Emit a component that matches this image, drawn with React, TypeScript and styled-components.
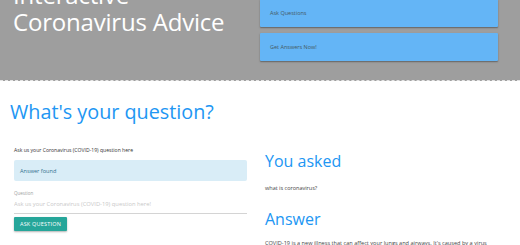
import React from "react";
import styled, { createGlobalStyle } from "styled-components";

const GlobalStyle = createGlobalStyle`
  *, *::before, *::after {
    box-sizing: border-box;
  }
  html, body {
    margin: 0;
    padding: 0;
    background: #ffffff;
    font-family: "Open Sans", "Noto Sans", sans-serif;
    overflow: hidden;
  }
`;

const Header = styled.header`
  display: flex;
  height: 81px;
  background: #9e9e9e;
  border-bottom: 1px dashed #e4e4e4;
  overflow: hidden;
`;

const Title = styled.h1`
  flex: 0 0 260px;
  margin: -19px 0 0 0;
  padding-left: 13px;
  color: #ffffff;
  font-weight: 400;
  font-size: 24px;
  line-height: 27px;
  letter-spacing: -0.2px;
`;

const Nav = styled.nav`
  display: flex;
  flex-direction: column;
  gap: 6px;
  width: 238px;
  margin-top: -1px;
`;

const NavCard = styled.div`
  height: 28px;
  display: flex;
  align-items: center;
  padding-left: 10px;
  background: #64b5f6;
  color: #455a64;
  font-size: 5.5px;
  border-radius: 1px;
  box-shadow: 0 1px 2px rgba(0, 0, 0, 0.25), 0 1px 1px rgba(0, 0, 0, 0.15);
`;

const Main = styled.main`
  padding: 0 10px;
`;

const PageHeading = styled.h2`
  margin: 18px 0 0;
  color: #2196f3;
  font-weight: 400;
  font-size: 19.8px;
  line-height: 26px;
`;

const Columns = styled.div`
  display: grid;
  grid-template-columns: 233px 233px;
  column-gap: 18px;
  padding-left: 4px;
  margin-top: 20px;
`;

const Column = styled.section`
  display: flex;
  flex-direction: column;
`;

const Hint = styled.p`
  margin: 0;
  color: #333333;
  font-size: 5.1px;
  line-height: 10px;
`;

const Alert = styled.div`
  margin-top: 5px;
  height: 21px;
  display: flex;
  align-items: center;
  padding-left: 6px;
  background: #d9edf7;
  color: #31708f;
  font-size: 5.6px;
  border-radius: 2px;
`;

const FieldLabel = styled.label`
  margin-top: 9px;
  color: #9e9e9e;
  font-size: 4.5px;
  line-height: 6px;
`;

const Input = styled.input`
  height: 18px;
  padding: 0 0 1px;
  margin: 0;
  border: none;
  border-bottom: 1px solid #d4d4d4;
  outline: none;
  background: transparent;
  font-family: inherit;
  font-size: 5.8px;
  color: #333333;
  &::placeholder {
    color: #c8c8c8;
  }
`;

const Button = styled.button`
  align-self: flex-start;
  margin-top: 3px;
  height: 14px;
  width: 53px;
  padding: 0;
  border: none;
  border-radius: 1px;
  background: #26a69a;
  color: #ffffff;
  font-family: inherit;
  font-size: 5.5px;
  letter-spacing: 0.2px;
  box-shadow: 0 1px 2px rgba(0, 0, 0, 0.3);
`;

const SubHeading = styled.h3<{ $gap: number }>`
  margin: ${(p) => p.$gap}px 0 0;
  color: #2196f3;
  font-weight: 400;
  font-size: 16px;
  line-height: 20px;
`;

const Body = styled.p<{ $gap: number; $size: number }>`
  margin: ${(p) => p.$gap}px 0 0;
  color: #444444;
  font-size: ${(p) => p.$size}px;
  line-height: 8px;
`;

export default function App() {
  return (
    <>
      <GlobalStyle />
      <Header>
        <Title>
          Interactive
          <br />
          Coronavirus Advice
        </Title>
        <Nav>
          <NavCard>Ask Questions</NavCard>
          <NavCard>Get Answers Now!</NavCard>
        </Nav>
      </Header>
      <Main>
        <PageHeading>What's your question?</PageHeading>
        <Columns>
          <Column>
            <Hint>Ask us your Coronavirus (COVID-19) question here</Hint>
            <Alert>Answer found</Alert>
            <FieldLabel htmlFor="q">Question</FieldLabel>
            <Input id="q" placeholder="Ask us your Coronavirus (COVID-19) question here!" />
            <Button>ASK QUESTION</Button>
          </Column>
          <Column>
            <SubHeading $gap={6}>You asked</SubHeading>
            <Body $gap={13} $size={5.5}>what is coronavirus?</Body>
            <SubHeading $gap={17}>Answer</SubHeading>
            <Body $gap={10} $size={5.6}>
              COVID-19 is a new illness that can affect your lungs and airways. It's caused by a virus
              called coronavirus.
            </Body>
          </Column>
        </Columns>
      </Main>
    </>
  );
}
